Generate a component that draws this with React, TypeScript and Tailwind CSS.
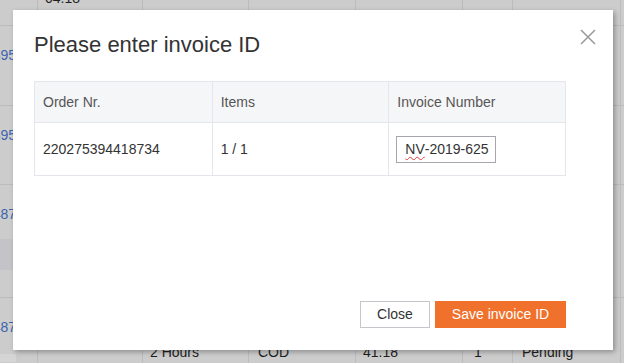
import React from 'react';

const cols = ['w-[38px]', 'w-[105px]', 'w-[106px]', 'w-[107px]', 'w-[107px]', 'w-[50px]', 'w-[108px]'];

const BgRow: React.FC<{ h: string; last?: boolean; cells: React.ReactNode[] }> = ({ h, last, cells }) => (
  <div className={`flex ${h} ${last ? '' : 'border-b border-[#bcbcbc]'}`}>
    {cols.map((w, i) => (
      <div key={i} className={`${w} shrink-0 border-r border-[#bcbcbc] overflow-hidden`}>
        {cells[i]}
      </div>
    ))}
    <div className="flex-1" />
  </div>
);

const Id: React.FC<{ text: string }> = ({ text }) => (
  <div className="flex justify-end pr-[21px] pt-[21px] whitespace-nowrap text-[14px] leading-[16px] text-[#3a64ac]">
    {text}
  </div>
);

const Txt: React.FC<{ text: string; pt: string; pl?: string }> = ({ text, pt, pl = 'pl-[7px]' }) => (
  <div className={`${pt} ${pl} whitespace-nowrap text-[14px] leading-[16px] text-[#1e1e1e]`}>{text}</div>
);

const App: React.FC = () => {
  return (
    <div className="relative w-[624px] h-[363px] overflow-hidden bg-[#cccccc] font-['Liberation_Sans',Arial,sans-serif]">
      {/* background table behind the overlay */}
      <div className="flex flex-col">
        <BgRow h="h-[26px]" cells={[null, <Txt key="t" text="04:18" pt="mt-[-10px]" />]} />
        <BgRow h="h-[80px]" cells={[<Id key="a" text="4395" />]} />
        <BgRow h="h-[79px]" cells={[<Id key="b" text="4395" />]} />
        <BgRow
          h="h-[113px]"
          cells={[
            <div key="c">
              <Id text="2487" />
              <div className="mt-[17px] h-[31px] bg-[#c3c3c8]" />
            </div>,
          ]}
        />
        <BgRow
          h="h-[66px]"
          last
          cells={[
            <div key="d">
              <Id text="2487" />
              <div className="mt-[19px] h-[8px] w-[16px] bg-[#d5d5d5]" />
            </div>,
            <Txt key="e" text="14:00" pt="pt-[62px]" />,
            <Txt key="f" text="2 Hours" pt="pt-[46px]" />,
            <Txt key="g" text="COD" pt="pt-[46px]" pl="pl-[9px]" />,
            <Txt key="h" text="41.18" pt="pt-[46px]" />,
            <Txt key="i" text="1" pt="pt-[46px]" pl="pl-[11px]" />,
            <Txt key="j" text="Pending" pt="pt-[46px]" pl="pl-[9px]" />,
          ]}
        />
      </div>

      {/* modal */}
      <div className="absolute left-[13px] top-[10px] w-[600px] h-[340px] bg-white shadow-[2px_2px_5px_rgba(0,0,0,0.3)] flex flex-col">
        <div className="flex items-start justify-between pl-[21px] pr-[17px] pt-[19px]">
          <h2 className="mt-[3px] text-[22px] leading-[26px] font-normal text-[#333333]">Please enter invoice ID</h2>
          <svg width="16" height="16" viewBox="0 0 16 16" className="shrink-0">
            <path d="M1 1 L15 15 M15 1 L1 15" stroke="#9a9a9a" strokeWidth="1.5" fill="none" />
          </svg>
        </div>

        <div className="ml-[21px] mr-[47px] mt-[23px] border border-[#e4e6eb] text-[14px]">
          <div className="grid grid-cols-3 h-[41px] bg-[#f5f6f8] border-b border-[#e4e6eb] text-[#555555]">
            <div className="flex items-center pl-[8px]">Order Nr.</div>
            <div className="flex items-center pl-[8px] border-l border-[#e4e6eb]">Items</div>
            <div className="flex items-center pl-[8px] border-l border-[#e4e6eb]">Invoice Number</div>
          </div>
          <div className="grid grid-cols-3 h-[52px] text-[#333333]">
            <div className="flex items-center pl-[8px]">220275394418734</div>
            <div className="flex items-center pl-[8px] border-l border-[#e4e6eb]">1 / 1</div>
            <div className="flex items-center pl-[7px] border-l border-[#e4e6eb]">
              <div className="w-[100px] h-[27px] border border-[#a6a6ae] flex items-center pl-[8px] text-[#333333]">
                <span className="underline decoration-wavy decoration-[#e23b3b] decoration-1 underline-offset-[2px]">NV</span>
                -2019-625
              </div>
            </div>
          </div>
        </div>

        <div className="mt-auto mb-[22px] mr-[47px] flex justify-end gap-[5px] text-[14px]">
          <button className="w-[70px] h-[27px] border border-[#c5c5cc] bg-white text-[#333333]">Close</button>
          <button className="w-[131px] h-[27px] bg-[#f0712b] text-white">Save invoice ID</button>
        </div>
      </div>
    </div>
  );
};

export default App;
